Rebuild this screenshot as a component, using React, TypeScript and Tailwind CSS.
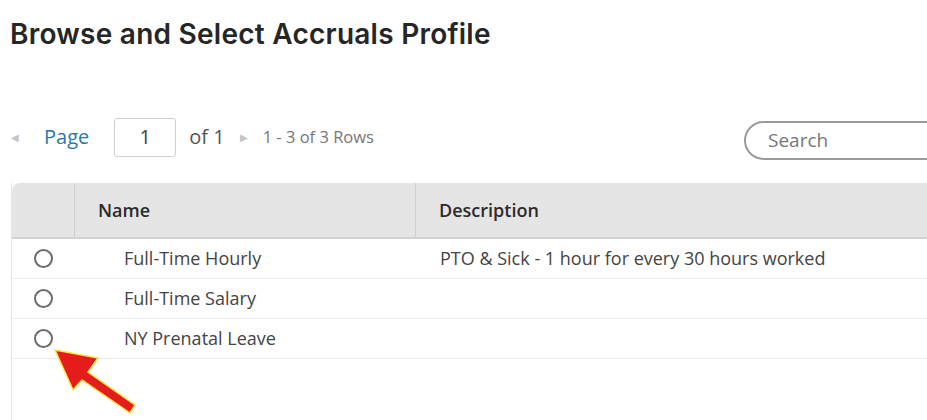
import { useState } from 'react'

const rows = [
  { id: 'fth', name: 'Full-Time Hourly', description: 'PTO & Sick - 1 hour for every 30 hours worked' },
  { id: 'fts', name: 'Full-Time Salary', description: '' },
  { id: 'nypl', name: 'NY Prenatal Leave', description: '' },
]

function Radio({ checked, onClick }: { checked: boolean; onClick: () => void }) {
  return (
    <button
      type="button"
      onClick={onClick}
      className="w-[19px] h-[19px] rounded-full border-[2px] border-[#6b6b6b] bg-white flex items-center justify-center"
    >
      {checked && <span className="w-[9px] h-[9px] rounded-full bg-[#4a4a4a]" />}
    </button>
  )
}

export default function App() {
  const [selected, setSelected] = useState<string | null>(null)

  return (
    <div className="relative w-[927px] h-[420px] overflow-hidden bg-white font-['Open_Sans',sans-serif] text-[#333]">
      <h1 className="pl-[10px] pt-[16px] text-[28px] leading-[36px] font-semibold text-[#262626] font-['Inter',sans-serif] tracking-[0.25px]">
        Browse and Select Accruals Profile
      </h1>

      <div className="mt-[65px] flex items-center h-[40px] pl-[11px]">
        <span className="text-[#c4c4c4] text-[10px]">◀</span>
        <span className="ml-[25px] text-[20px] text-[#2a78ad]">Page</span>
        <div className="ml-[25px] w-[62px] h-[39px] border border-[#cfcfcf] rounded-[3px] flex items-center justify-center text-[20px] text-[#444]">
          1
        </div>
        <span className="ml-[13px] text-[20px] text-[#555]">of 1</span>
        <span className="ml-[15px] text-[#c4c4c4] text-[10px]">▶</span>
        <span className="ml-[15px] text-[16.5px] text-[#777]">1 - 3 of 3 Rows</span>
        <div className="ml-auto mr-[-60px] w-[243px] h-[39px] mt-[7px] rounded-full border-[2px] border-[#9a9a9a] flex items-center pl-[22px] text-[19px] text-[#777]">
          Search
        </div>
      </div>

      <div className="mt-[26px] ml-[11px] w-[940px] border-l border-[#e6e6e6]">
        <div className="flex h-[56px] bg-[#e5e5e5] rounded-tl-[8px] border-b-[2px] border-[#d2d2d2] text-[18px] font-semibold text-[#2b2b2b]">
          <div className="w-[63px] border-r border-[#cfcfcf]" />
          <div className="w-[341px] border-r border-[#cfcfcf] flex items-center pl-[23px]">Name</div>
          <div className="flex-1 flex items-center pl-[23px]">Description</div>
        </div>
        {rows.map((r) => (
          <div key={r.id} className="flex h-[40px] border-b border-[#ececec] text-[18px] text-[#444]">
            <div className="w-[63px] flex items-center pl-[22px]">
              <Radio checked={selected === r.id} onClick={() => setSelected(r.id)} />
            </div>
            <div className="w-[342px] flex items-center pl-[49px]">{r.name}</div>
            <div className="flex-1 flex items-center pl-[23px]">{r.description}</div>
          </div>
        ))}
        <div className="h-[80px]" />
      </div>

      <svg className="absolute left-[50px] top-[343px]" width="100" height="77" viewBox="0 0 100 77">
        <polygon
          points="5,7 48,15 38,29 85,62 80,70 32,37 23,47"
          fill="#e41d1c"
          stroke="#f7e64a"
          strokeWidth="1.5"
          strokeLinejoin="miter"
        />
      </svg>
    </div>
  )
}
